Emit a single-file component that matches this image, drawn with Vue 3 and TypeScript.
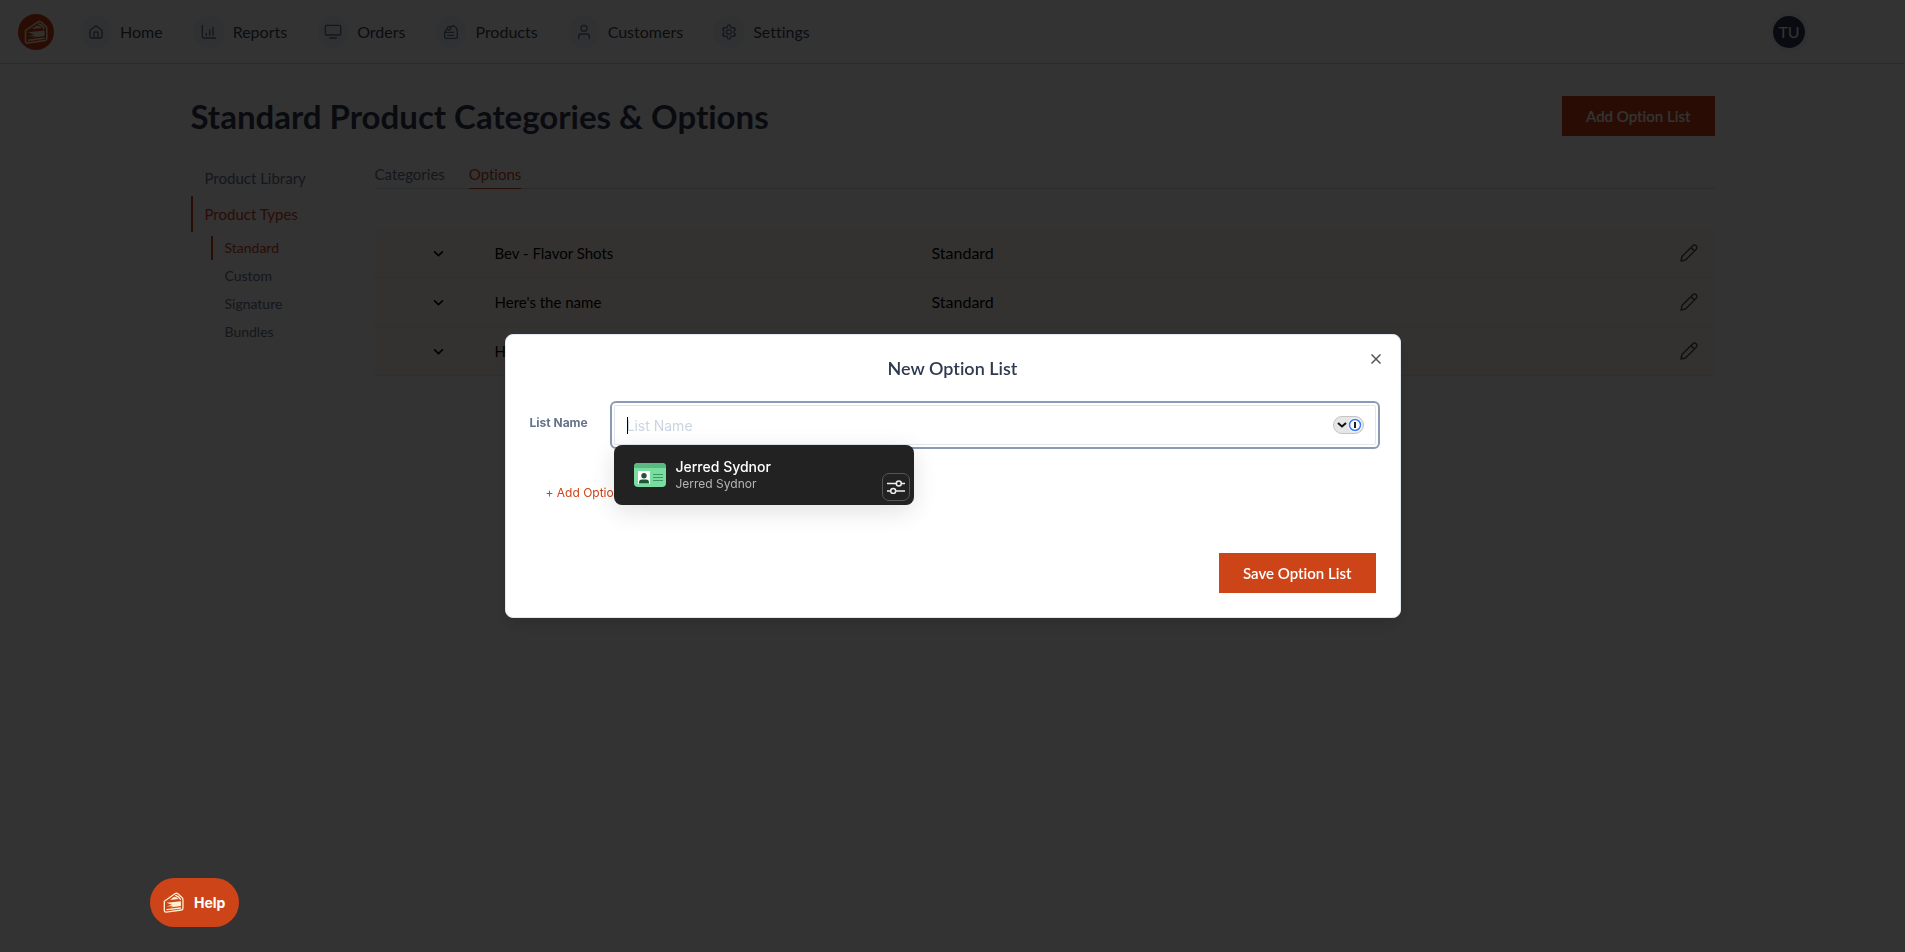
<script setup lang="ts">
import { ref } from 'vue'

interface NavItem { label: string; paths: string[] }

const nav: NavItem[] = [
  { label: 'Home', paths: ['M3 9.5 L12 2.5 L21 9.5 V19 a2 2 0 0 1 -2 2 H5 a2 2 0 0 1 -2 -2 Z', 'M9 21 V13 a1 1 0 0 1 1 -1 h4 a1 1 0 0 1 1 1 V21'] },
  { label: 'Reports', paths: ['M2 2 V19 a2 2 0 0 0 2 2 H22', 'M8 14 V17', 'M13 9 V17', 'M18 5 V17'] },
  { label: 'Orders', paths: ['M2 2 H22 a1.5 1.5 0 0 1 1.5 1.5 V15 a1.5 1.5 0 0 1 -1.5 1.5 H2 A1.5 1.5 0 0 1 .5 15 V3.5 A1.5 1.5 0 0 1 2 2 Z', 'M7 21 H17'] },
  { label: 'Products', paths: ['M11.5 5 L14 2.5 Q21.500 4 21.500 12 V19.500 a2 2 0 0 1 -2 2 H4.500 a2 2 0 0 1 -2 -2 V12 Q2.500 9.500 6 8.500', 'M3 12.500 H16', 'M7 17 H16', 'M11.500 6.500 a2.500 2.500 0 1 1 -5 0 a2.500 2.500 0 0 1 5 0 Z'] },
  { label: 'Customers', paths: ['M16.5 6.5 a4.5 4.5 0 1 1 -9 0 a4.5 4.5 0 0 1 9 0 Z', 'M4 22 V19 a4 4 0 0 1 4 -4 H16 a4 4 0 0 1 4 4 V22'] },
  { label: 'Settings', paths: ['M10.3 1.8 h3.4 l.8 3 2.4 1.4 3.1 -.8 1.800 3 -2.300 2.200 v2.800 l2.300 2.200 -1.800 3 -3.100 -.8 -2.400 1.400 -.8 3 h-3.400 l-.8 -3 -2.400 -1.400 -3.100 .8 -1.800 -3 2.300 -2.200 v-2.800 L2.200 8.400 l1.800 -3 3.100 .8 2.400 -1.400 Z', 'M15.500 12 a3.500 3.500 0 1 1 -7 0 a3.500 3.500 0 0 1 7 0 Z'] },
]
const types = ['Standard', 'Custom', 'Signature', 'Bundles']
const lists = ['Bev - Flavor Shots', "Here's the name", "Here's the name"]
const listName = ref('')
</script>

<template>
  <div class="page">
    <header class="topbar">
      <a href="#" class="logo" aria-label="Dashboard">
        <svg viewBox="0 0 24 24" class="cake">
          <path class="line" d="M1.500 10.500 L14 1.800 Q15.500 1 17 2 L22 6.500 Q22.800 7.500 22.800 9 V18.500 Q22.800 20.300 21 20.600 L3.500 23 Q1.500 23 1.500 21 Z" />
          <path class="fill" d="M8 9 L12.500 5.500 Q15.500 5.500 18 8 Z" />
          <path class="line" d="M14.500 4 Q18.500 5 20 8.500" />
          <path class="fill" d="M4 12.200 L20.500 10.500 V16 L8 17.800 L12 16 L4 16.500 L10 14.500 Z" />
          <path class="line" d="M4.500 20.200 L20 18.300" />
        </svg>
      </a>
      <nav class="nav">
        <a v-for="item in nav" :key="item.label" href="#" class="nav-item">
          <span class="nav-icon">
            <svg viewBox="0 0 24 24"><path v-for="p in item.paths" :key="p" :d="p" /></svg>
          </span>
          {{ item.label }}
        </a>
      </nav>
      <button class="avatar">TU</button>
    </header>

    <main class="content">
      <div class="heading">
        <h1>Standard Product Categories &amp; Options</h1>
        <button class="primary">Add Option List</button>
      </div>
      <div class="columns">
        <aside class="side">
          <a href="#" class="side-link">Product Library</a>
          <a href="#" class="side-link active">Product Types</a>
          <div class="sub">
            <a v-for="(t, i) in types" :key="t" href="#" class="sub-link" :class="{ active: i === 0 }">{{ t }}</a>
          </div>
        </aside>
        <section class="panel">
          <div class="tabs">
            <a href="#" class="tab">Categories</a>
            <a href="#" class="tab active">Options</a>
          </div>
          <table class="lists">
            <tbody>
              <tr v-for="(l, i) in lists" :key="i">
                <td class="c-toggle">
                  <button class="bare" aria-label="Expand"><svg class="chev" viewBox="0 0 10 6"><path d="M1 1 L5 5 L9 1" /></svg></button>
                </td>
                <td class="c-name">{{ l }}</td>
                <td>Standard</td>
                <td class="c-edit">
                  <button class="bare" aria-label="Edit">
                    <svg class="pencil" viewBox="0 0 18 18"><path d="M1 17 L2 12.500 L12.800 1.800 a2.300 2.300 0 0 1 3.400 3.400 L5.500 16 Z M11 3.600 L14.400 7" /></svg>
                  </button>
                </td>
              </tr>
            </tbody>
          </table>
        </section>
      </div>
    </main>

    <div class="overlay">
      <form class="modal" role="dialog" aria-labelledby="dialog-title" @submit.prevent>
        <button type="button" class="bare close" aria-label="Close"><svg viewBox="0 0 10 10"><path d="M.5 .5 L9.500 9.500 M9.500 .5 L.5 9.500" /></svg></button>
        <h2 id="dialog-title">New Option List</h2>
        <div class="field">
          <label for="list-name">List Name</label>
          <div class="input-wrap">
            <input id="list-name" v-model="listName" type="text" placeholder="List Name" autocomplete="off">
            <span class="caret"></span>
            <button type="button" class="filler" aria-label="Autofill">
              <svg viewBox="0 0 31 18">
                <rect x=".5" y=".5" width="30" height="17" rx="8.500" fill="#e6e6e6" stroke="#c4c4c4" />
                <path d="M5 7 L9 10.500 L13 7" fill="none" stroke="#111" stroke-width="2" />
                <circle cx="22" cy="9" r="7" fill="#fff" />
                <circle cx="22" cy="9" r="5.500" fill="#fff" stroke="#3b7bf6" stroke-width="1.500" />
                <rect x="21" y="6" width="2" height="6" fill="#222" />
              </svg>
            </button>
            <div class="suggest">
              <svg class="card" viewBox="0 0 32 24">
                <rect width="32" height="24" rx="4" fill="#79dda0" />
                <path d="M0 5 V4 a4 4 0 0 1 4 -4 H28 a4 4 0 0 1 4 4 V5 Z" fill="#5cb883" />
                <rect x="4" y="8" width="12" height="13" fill="#fff" />
                <circle cx="10" cy="12.800" r="2.700" fill="#1f5636" />
                <path d="M5 20.500 v-1 a3 3 0 0 1 3 -3 h4 a3 3 0 0 1 3 3 v1 Z" fill="#1f5636" />
                <path d="M19 11.500 H29 M19 14.500 H29 M19 17.500 H29" stroke="#3e9863" />
              </svg>
              <div class="who"><strong>Jerred Sydnor</strong><span>Jerred Sydnor</span></div>
              <button type="button" class="tune" aria-label="Autofill settings">
                <svg viewBox="0 0 18 14"><path d="M0 3.500 H9 M14.500 3.500 H18 M0 11 H3.500 M9 11 H18" /><circle cx="11.800" cy="3.500" r="2.500" /><circle cx="6.200" cy="11" r="2.500" /></svg>
              </button>
            </div>
          </div>
        </div>
        <button type="button" class="bare add">+ Add Option</button>
        <div class="actions"><button class="primary">Save Option List</button></div>
      </form>
    </div>

    <button class="help">
      <svg viewBox="0 0 24 24" class="cake">
        <path class="line" d="M1.500 10.500 L14 1.800 Q15.500 1 17 2 L22 6.500 Q22.800 7.500 22.800 9 V18.500 Q22.800 20.300 21 20.600 L3.500 23 Q1.500 23 1.500 21 Z" />
        <path class="fill" d="M8 9 L12.500 5.500 Q15.500 5.500 18 8 Z" />
        <path class="line" d="M14.500 4 Q18.500 5 20 8.500" />
        <path class="fill" d="M4 12.200 L20.500 10.500 V16 L8 17.800 L12 16 L4 16.500 L10 14.500 Z" />
        <path class="line" d="M4.500 20.200 L20 18.300" />
      </svg>
      Help
    </button>
  </div>
</template>

<style scoped>
.page { min-height: 100vh; background: #fff; color: #2f3a50; font: 16px/24px Lato, sans-serif; font-variant-ligatures: none; }
.page *, .page *::before { box-sizing: border-box; }
svg { display: block; fill: none; }
a { color: inherit; text-decoration: none; }
button { font: inherit; font-variant-ligatures: none; border: 0; padding: 0; cursor: pointer; }
.bare { display: block; background: none; color: inherit; }
.cake .line { stroke: #fdf0cf; stroke-width: 1.500; stroke-linejoin: round; stroke-linecap: round; }
.cake .fill { fill: #fdf0cf; }

.topbar { display: flex; align-items: center; height: 64px; padding: 0 100px 0 18px; border-bottom: 1px solid #cbd0d6; }
.logo { display: grid; place-items: center; width: 36px; height: 36px; border-radius: 50%; background: #cd4418; }
.logo .cake { width: 24px; height: 24px; }
.nav { display: flex; gap: 30px; margin-left: 26px; flex: 1; }
.nav-item { display: flex; align-items: center; gap: 8px; color: #3b4252; }
.nav-icon { display: grid; place-items: center; width: 32px; height: 32px; border-radius: 50%; background: #f1f5f9; }
.nav-icon svg { width: 16px; height: 16px; overflow: visible; stroke: #64748b; stroke-width: 2; stroke-linecap: round; stroke-linejoin: round; }
.avatar { width: 32px; height: 32px; border-radius: 50%; background: #2f3a50; color: #fff; box-shadow: 0 0 0 4px #f1f5f9; }

.content { width: 80%; margin: 0 auto; padding-top: 32px; }
.heading { display: flex; align-items: center; justify-content: space-between; }
h1 { margin: 0; font-size: 33px; line-height: 40px; font-weight: 700; color: #2f3a50; }
.primary { height: 40px; padding: 0 24px; background: #cd4418; color: #fff; font-size: 15px; font-weight: 600; }
.columns { display: flex; margin-top: 24px; }
.side { width: 184px; flex: none; }
.side-link { display: block; padding: 6px 12px; border-left: 2px solid transparent; color: #64748b; font-size: 15px; }
.sub { display: flex; flex-direction: column; gap: 4px; margin: 4px 0 0 20px; }
.sub-link { padding: 0 12px; border-left: 2px solid transparent; color: #64748b; font-size: 14px; }
.side .active { color: #cd4418; border-color: #cd4418; }
.panel { flex: 1; }
.tabs { display: flex; gap: 24px; height: 29px; border-bottom: 1px solid #cbd5e1; }
.tab { height: 29px; padding-top: 2px; font-size: 15px; color: #64748b; }
.tab.active { color: #cd4418; border-bottom: 1px solid #cd4418; }
.lists { width: 100%; margin-top: 40px; border-spacing: 0; color: #000; background: #fdf9f0; }
.lists td { height: 49px; padding: 0; border-bottom: 1px solid #e2e8f0; }
.lists .c-toggle { width: 120px; padding-left: 58px; }
.lists .c-name { width: 437px; font-size: 15px; }
.lists .c-edit { width: 35px; }
.bare svg { stroke: currentColor; }
.chev { width: 11px; height: 7px; stroke-width: 1.500; }
.pencil { width: 18px; height: 18px; color: #475569; stroke-width: 1.500; stroke-linejoin: round; }

.overlay { position: fixed; inset: 0; display: grid; place-items: center; background: rgba(0, 0, 0, .8); }
.modal { position: relative; width: 896px; max-width: 90%; padding: 19px 24px 24px; border: 1px solid #e2e8f0; border-radius: 8px; background: #fff; box-shadow: 0 8px 16px rgba(0, 0, 0, .12); font-family: Inter, sans-serif; }
.close { position: absolute; top: 19px; right: 19px; padding: 0; color: #555; }
.close svg { width: 10px; height: 10px; stroke-width: 1.500; }
h2 { margin: 0; font: 600 18px/28px Lato, sans-serif; font-variant-ligatures: none; text-align: center; }
.field { display: flex; align-items: flex-start; margin-top: 23px; }
label { width: 84px; flex: none; padding-top: 8px; font-size: 12px; line-height: 20px; font-weight: 700; color: #64748b; }
.input-wrap { position: relative; flex: 1; }
input { display: block; width: 100%; height: 40px; padding: 0 12px; border: 1px solid #e2e8f0; border-radius: 2px; outline: 2px solid #8c9bb3; outline-offset: 2px; background: #fff; font: 14px/20px Inter, sans-serif; color: #111; }
input::placeholder { color: #cbd5e1; opacity: 1; }
.caret { position: absolute; left: 13px; top: 12px; width: 1px; height: 17px; background: #000; }
.filler { position: absolute; right: 12px; top: 11px; background: none; }
.filler svg { width: 31px; height: 18px; }
.suggest { position: absolute; top: 40px; left: 0; z-index: 1; display: flex; align-items: center; gap: 10px; width: 300px; height: 60px; padding: 0 4px 0 20px; border-radius: 8px; background: #222; box-shadow: 0 6px 24px rgba(0, 0, 0, .12); }
.card { width: 32px; height: 24px; }
.who { display: flex; flex: 1; flex-direction: column; font-size: 12px; line-height: 16px; color: #b5b5b5; }
.who strong { font-size: 14px; line-height: 18px; font-weight: 500; color: #fff; }
.tune { display: grid; place-items: center; align-self: flex-end; width: 28px; height: 28px; margin-bottom: 4px; border: 1px solid #555; border-radius: 7px; background: none; }
.tune svg { width: 18px; height: 14px; stroke: #eee; stroke-width: 1.500; }
.add { margin: 38px 0 0 16px; font-size: 12px; line-height: 20px; color: #cd4418; }
.actions { display: flex; justify-content: flex-end; margin-top: 50px; font-family: Lato, sans-serif; }

.help { position: fixed; left: 150px; bottom: 25px; display: flex; align-items: center; gap: 10px; height: 49px; padding: 0 14px 0 13px; border-radius: 25px; background: #cd4418; color: #fff; font: 700 14px/20px Inter, sans-serif; }
.help .cake { width: 21px; height: 21px; }
</style>

<style>
body { overflow: hidden; }
</style>
